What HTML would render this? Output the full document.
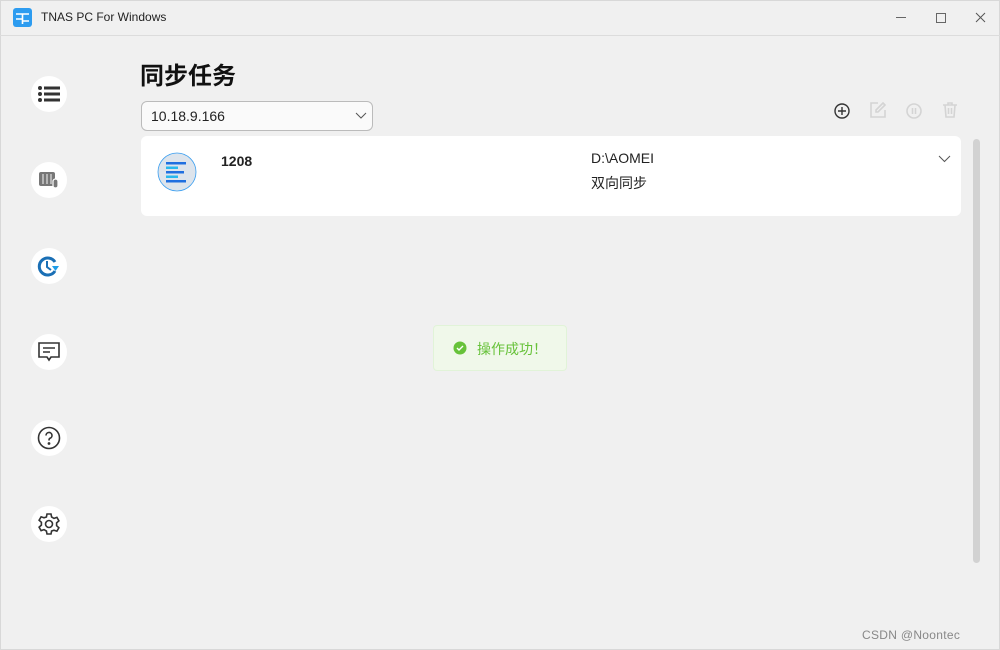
<!DOCTYPE html>
<html><head><meta charset="utf-8"><style>
*{margin:0;padding:0;box-sizing:border-box}
body{width:1000px;height:650px;background:#f0f0f0;font-family:"Liberation Sans","Noto Sans CJK SC",sans-serif;position:relative;overflow:hidden}
.a{position:absolute}
.tb{left:0;top:0;width:1000px;height:36px;border-bottom:1px solid #dcdcdc}
.nav{left:31px;width:36px;height:36px;border-radius:50%;background:#fff;display:flex;align-items:center;justify-content:center}
</style></head><body>
<div class="a" style="left:0;top:0;width:1000px;height:650px;border:1px solid #d8d8d8"></div>
<div class="a tb"></div>
<svg class="a" style="left:13px;top:8px" width="19" height="19" viewBox="0 0 19 19"><rect width="19" height="19" rx="3" fill="#2d9cf0"/><path d="M3 6H16M9.5 6V16M3 11H9.5M9.5 13H16" stroke="#fff" stroke-width="1.6" fill="none"/></svg>
<div class="a" style="left:41px;top:10px;font-size:12px;color:#222">TNAS PC For Windows</div>
<div class="a" style="left:896px;top:17px;width:10px;height:1px;background:#666"></div>
<div class="a" style="left:936px;top:13px;width:10px;height:10px;border:1px solid #666"></div>
<svg class="a" style="left:975px;top:12px" width="11" height="11"><path d="M1 1l9 9M10 1l-9 9" stroke="#555" stroke-width="1"/></svg>

<div class="a nav" style="top:76px"><svg width="22" height="18" viewBox="0 0 22 18" fill="#333"><circle cx="2" cy="3" r="2"/><circle cx="2" cy="9" r="2"/><circle cx="2" cy="15" r="2"/><rect x="6" y="1.5" width="16" height="3"/><rect x="6" y="7.5" width="16" height="3"/><rect x="6" y="13.5" width="16" height="3"/></svg></div>
<div class="a nav" style="top:162px"><svg width="22" height="20" viewBox="0 0 22 20"><rect x="1" y="2" width="16" height="14" rx="2" fill="#777"/><path d="M5 4v10M9 4v10M13 4v10" stroke="#ccc" stroke-width="1.5"/><rect x="15" y="9" width="5" height="9" rx="2.5" fill="#777" stroke="#fff" stroke-width="1.2"/></svg></div>
<div class="a nav" style="top:248px"><svg width="24" height="22" viewBox="0 0 24 22"><path d="M18 7A8.5 8.5 0 1 0 18 16" stroke="#1a6fb5" stroke-width="3" fill="none"/><path d="M10 6v6l4 3" stroke="#1a6fb5" stroke-width="2" fill="none"/><path d="M15 11h7l-3.5 5z" fill="#1e9de8"/></svg></div>
<div class="a nav" style="top:334px"><svg width="24" height="22" viewBox="0 0 24 22" fill="none" stroke="#333" stroke-width="1.6"><path d="M2 2h20v14h-8l-2 3-2-3H2z"/><path d="M6 7h12M6 11h7"/></svg></div>
<div class="a nav" style="top:420px"><svg width="24" height="24" viewBox="0 0 24 24" fill="none" stroke="#333" stroke-width="1.6"><circle cx="12" cy="12" r="10.5"/><path d="M9 9.5a3 3 0 1 1 4 2.8c-1 .4-1 1.2-1 2.2"/><circle cx="12" cy="17.5" r=".6" fill="#333"/></svg></div>
<div class="a nav" style="top:506px"><svg width="24" height="24" viewBox="0 0 24 24" fill="none" stroke="#333" stroke-width="1.6"><path d="M10 2h4l.6 3 2.4 1.4 2.9-1 2 3.4-2.3 2.1v2.8l2.3 2.1-2 3.4-2.9-1L14.6 19 14 22h-4l-.6-3L7 17.6l-2.9 1-2-3.4 2.3-2.1v-2.8L2.1 8.2l2-3.4 2.9 1L9.4 5z"/><circle cx="12" cy="12" r="3.5"/></svg></div>

<div class="a" style="left:140px;top:56px;font-size:24px;font-weight:bold;color:#111">同步任务</div>
<div class="a" style="left:141px;top:101px;width:232px;height:30px;border:1px solid #bbb;border-radius:6px;background:#fafafa;font-size:14px;color:#222;padding:6px 9px">10.18.9.166</div>
<svg class="a" style="left:355px;top:112px" width="12" height="8"><path d="M1 1l5 5 5-5" stroke="#555" fill="none"/></svg>
<svg class="a" style="left:833px;top:102px" width="18" height="18" fill="none" stroke="#333" stroke-width="1.4"><circle cx="9" cy="9" r="7"/><path d="M9 5v8M5 9h8"/></svg>
<svg class="a" style="left:869px;top:101px" width="18" height="18" fill="none" stroke="#d4d4d4" stroke-width="1.6"><path d="M9 2H2v14h14V9"/><path d="M14 2l2 2-7 7H7V9z"/></svg>
<svg class="a" style="left:905px;top:102px" width="18" height="18" fill="none" stroke="#d4d4d4" stroke-width="1.6"><circle cx="9" cy="9" r="7"/><path d="M7.5 6v6M10.5 6v6"/></svg>
<svg class="a" style="left:941px;top:101px" width="18" height="18" fill="none" stroke="#d4d4d4" stroke-width="1.6"><path d="M2 4h14M7 4V2h4v2M4 4l1 12h8l1-12M7.5 7v6M10.5 7v6"/></svg>

<div class="a" style="left:141px;top:136px;width:820px;height:80px;background:#fff;border-radius:6px"></div>
<svg class="a" style="left:157px;top:152px" width="40" height="40"><circle cx="20" cy="20" r="19" fill="#dde4ec" stroke="#3a9ef0" stroke-width="0.8"/><rect x="9" y="10" width="20" height="2.5" fill="#1f6fe0"/><rect x="9" y="14.5" width="12" height="2.5" fill="#28b8ee"/><rect x="9" y="19" width="18" height="2.5" fill="#1f6fe0"/><rect x="9" y="23.5" width="12" height="2.5" fill="#28b8ee"/><rect x="9" y="28" width="20" height="2.5" fill="#1f6fe0"/></svg>
<div class="a" style="left:221px;top:153px;font-size:14px;font-weight:bold;color:#222">1208</div>
<div class="a" style="left:591px;top:150px;font-size:14px;color:#222">D:\AOMEI</div>
<div class="a" style="left:591px;top:173px;font-size:14px;color:#222">双向同步</div>
<svg class="a" style="left:938px;top:155px" width="13" height="8"><path d="M1 1l5.5 5.5L12 1" stroke="#555" fill="none"/></svg>
<div class="a" style="left:973px;top:139px;width:7px;height:424px;background:#d2d2d2;border-radius:4px"></div>

<div class="a" style="left:433px;top:325px;width:134px;height:46px;background:#f0f8ea;border:1px solid #e1f3d8;border-radius:4px"></div>
<svg class="a" style="left:453px;top:341px" width="14" height="14"><circle cx="7" cy="7" r="6.5" fill="#67c23a"/><path d="M4 7l2 2 4-4" stroke="#fff" stroke-width="1.4" fill="none"/></svg>
<div class="a" style="left:477px;top:339px;font-size:14px;color:#67c23a">操作成功！</div>
<div class="a" style="left:862px;top:628px;font-size:12px;color:#888;letter-spacing:0.3px">CSDN @Noontec</div>
</body></html>
